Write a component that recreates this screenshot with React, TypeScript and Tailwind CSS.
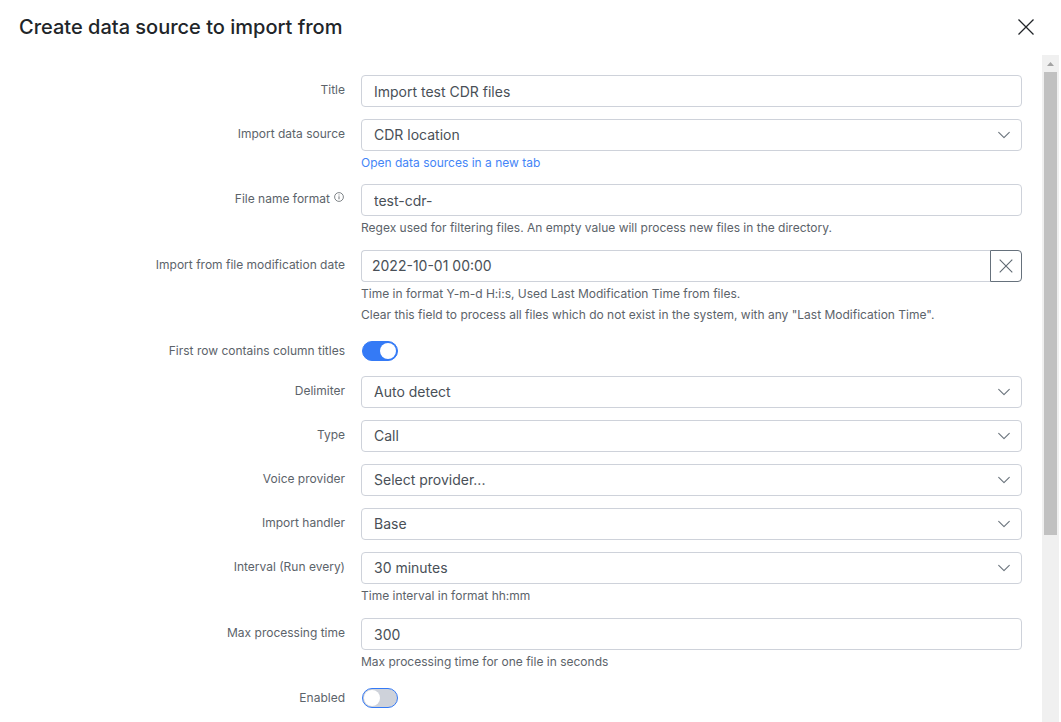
import { useState, type ReactNode } from "react";

const control =
  "block h-8 w-full appearance-none rounded border border-[#ced2da] bg-white pl-3 text-sm font-normal text-[#495057] outline-none focus:border-[#3b7ff5]";

function Row({
  id,
  label,
  info,
  toggle,
  children,
}: {
  id: string;
  label: string;
  info?: boolean;
  toggle?: boolean;
  children: ReactNode;
}) {
  return (
    <div className="grid grid-cols-[minmax(0,325fr)_minmax(0,661fr)] gap-x-4">
      <label
        htmlFor={id}
        className={
          toggle
            ? "flex h-[27px] items-center justify-end text-xs font-normal text-[#5c636a]"
            : "flex h-[30px] items-center justify-end text-xs font-normal text-[#5c636a]"
        }
      >
        {label}
        {info && (
          <svg viewBox="0 0 10 10" className="mr-px mb-1 ml-1 h-2.5 w-2.5" fill="none" stroke="#4b5157" aria-hidden="true">
            <circle cx="5" cy="5" r="4.4" strokeWidth="0.7" />
            <path d="M5 4.3v3M5 2.5v.9" strokeWidth="0.8" />
          </svg>
        )}
      </label>
      <div className="min-w-0">{children}</div>
    </div>
  );
}

function Help({ children }: { children: ReactNode }) {
  return <p className="mt-px text-xs leading-[21px] font-normal text-[#5c636a]">{children}</p>;
}

function Text({ id, value }: { id: string; value: string }) {
  return <input id={id} type="text" defaultValue={value} className={control} />;
}

function Select({ id, value }: { id: string; value: string }) {
  return (
    <div className="relative">
      <select id={id} className={control}>
        <option>{value}</option>
      </select>
      <svg
        viewBox="0 0 12 8"
        className="pointer-events-none absolute top-3 right-3 h-2 w-3"
        fill="none"
        stroke="#6b747d"
        strokeWidth="1.1"
        strokeLinecap="round"
        strokeLinejoin="round"
        aria-hidden="true"
      >
        <path d="M.7 1.3 6 6.6l5.3-5.3" />
      </svg>
    </div>
  );
}

function Toggle({ id, on }: { id: string; on?: boolean }) {
  return (
    <div className="flex h-[27px] items-center pl-px">
      <input
        id={id}
        type="checkbox"
        role="switch"
        defaultChecked={on}
        className="flex h-5 w-9 appearance-none items-center rounded-full border border-[#347af6] bg-[#ced2da] px-px before:block before:h-4 before:w-4 before:rounded-full before:bg-white checked:justify-end checked:bg-[#347af6]"
      />
    </div>
  );
}

export default function App() {
  const [date, setDate] = useState("2022-10-01 00:00");

  return (
    <div className="flex h-screen flex-col bg-white font-['Inter',sans-serif]">
      <header className="flex h-[55px] shrink-0 items-center justify-between pr-[27px] pb-0.5 pl-[19px]">
        <h1 className="text-xl font-medium text-[#212529]">Create data source to import from</h1>
        <button type="button" aria-label="Close" className="h-4 w-4">
          <svg viewBox="0 0 16 16" className="h-4 w-4" fill="none" stroke="#212529" strokeWidth="1.3" aria-hidden="true">
            <path d="M.5.5l15 15M15.5.5l-15 15" />
          </svg>
        </button>
      </header>
      <div className="flex min-h-0 flex-1 pr-0.5">
        <form className="flex min-w-0 flex-1 flex-col gap-3 overflow-y-auto px-5 pt-5 [scrollbar-width:none]">
          <Row id="title" label="Title">
            <Text id="title" value="Import test CDR files" />
          </Row>
          <Row id="source" label="Import data source">
            <Select id="source" value="CDR location" />
            <a href="#sources" className="mt-[3px] block text-xs leading-[18px] font-normal text-[#4485f7]">
              Open data sources in a new tab
            </a>
          </Row>
          <Row id="format" label="File name format" info>
            <Text id="format" value="test-cdr-" />
            <Help>Regex used for filtering files. An empty value will process new files in the directory.</Help>
          </Row>
          <Row id="date" label="Import from file modification date">
            <div className="flex">
              <input
                id="date"
                type="text"
                value={date}
                onChange={(e) => setDate(e.target.value)}
                className="h-8 min-w-0 flex-1 rounded-l border border-r-0 border-[#ced2da] pb-0.5 pl-2.5 text-sm font-normal text-[#495057] outline-none"
              />
              <button
                type="button"
                aria-label="Clear date"
                onClick={() => setDate("")}
                className="flex h-8 w-8 items-center justify-center rounded-r border border-[#66717c]"
              >
                <svg viewBox="0 0 14 14" className="h-3.5 w-3.5" fill="none" stroke="#5f6972" strokeWidth="1.1" aria-hidden="true">
                  <path d="M.7.7l12.6 12.6M13.3.7.7 13.3" />
                </svg>
              </button>
            </div>
            <Help>
              Time in format Y-m-d H:i:s, Used Last Modification Time from files.
              <br />
              Clear this field to process all files which do not exist in the system, with any "Last Modification Time".
            </Help>
          </Row>
          <Row id="titles" label="First row contains column titles" toggle>
            <Toggle id="titles" on />
          </Row>
          <Row id="delimiter" label="Delimiter">
            <Select id="delimiter" value="Auto detect" />
          </Row>
          <Row id="type" label="Type">
            <Select id="type" value="Call" />
          </Row>
          <Row id="provider" label="Voice provider">
            <Select id="provider" value="Select provider..." />
          </Row>
          <Row id="handler" label="Import handler">
            <Select id="handler" value="Base" />
          </Row>
          <Row id="interval" label="Interval (Run every)">
            <Select id="interval" value="30 minutes" />
            <Help>Time interval in format hh:mm</Help>
          </Row>
          <Row id="max" label="Max processing time">
            <Text id="max" value="300" />
            <Help>Max processing time for one file in seconds</Help>
          </Row>
          <Row id="enabled" label="Enabled" toggle>
            <Toggle id="enabled" />
          </Row>
        </form>
        <div className="flex w-[17px] shrink-0 flex-col items-center bg-[#f0f0f0]" aria-hidden="true">
          <div className="flex h-[17px] shrink-0 items-center">
            <svg viewBox="0 0 7 4" className="h-1 w-[7px]" fill="#a3a3a3">
              <path d="M3.5 0 7 4H0z" />
            </svg>
          </div>
          <div className="h-[69.4%] w-[13px] bg-[#c1c1c1]" />
        </div>
      </div>
    </div>
  );
}
